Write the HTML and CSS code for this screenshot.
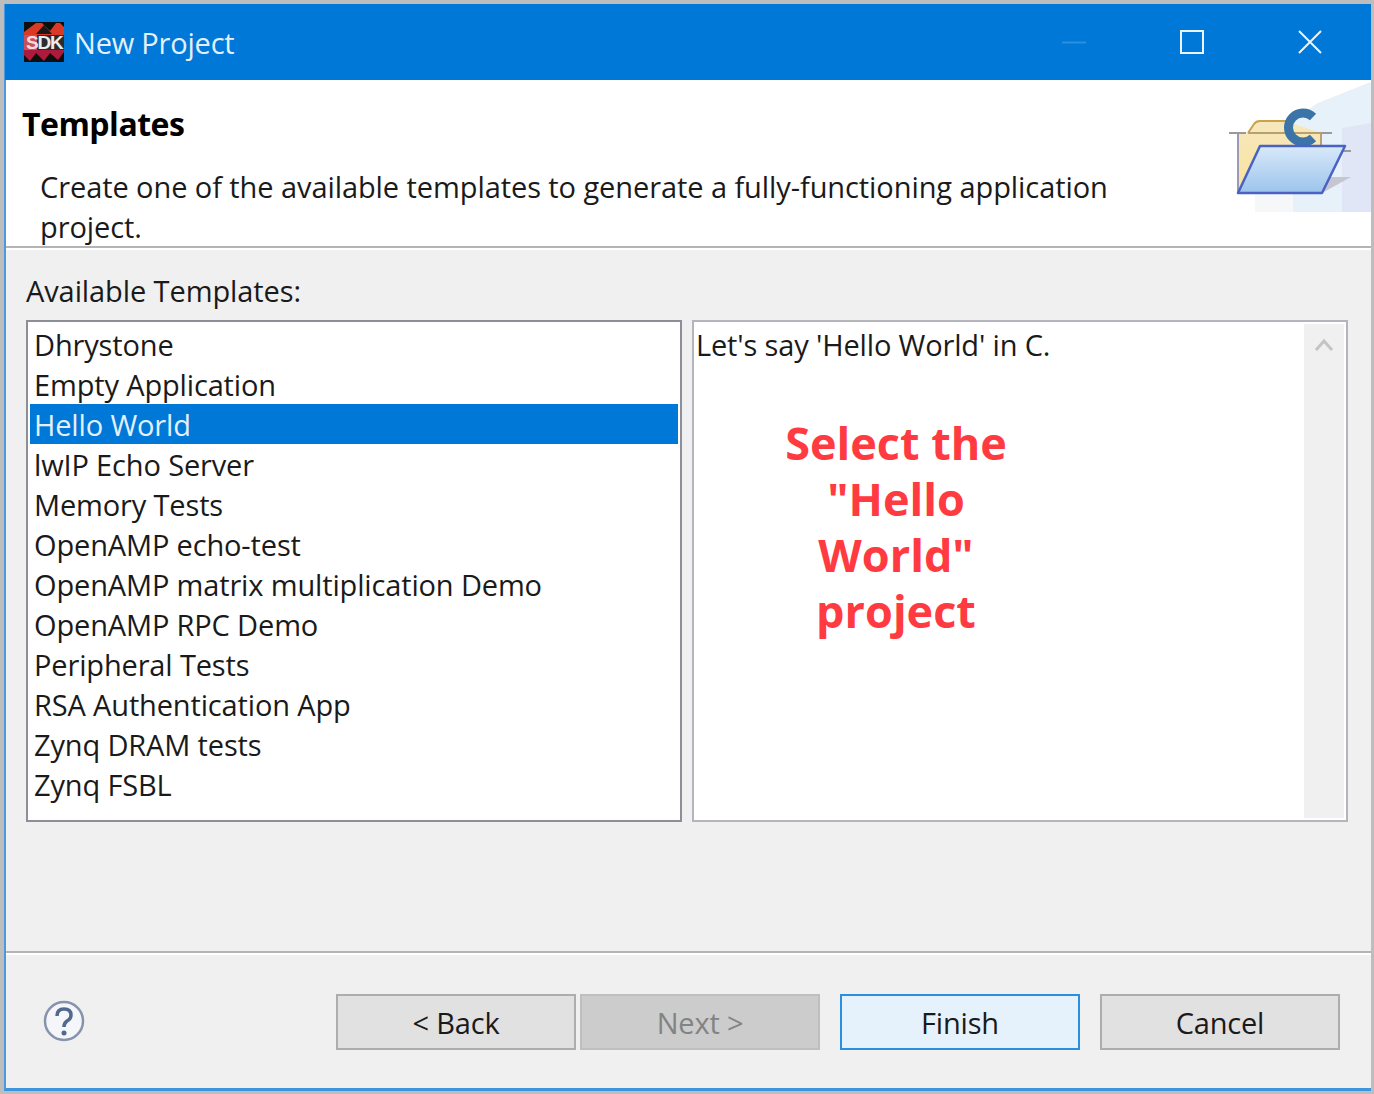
FILE: index.html
```html
<!DOCTYPE html>
<html lang="en">
  <head>
    <meta charset="UTF-8" />
    <meta name="viewport" content="width=device-width, initial-scale=1.0" />
    <title>New Project</title>
    <link rel="stylesheet" href="styles.css">
  </head>
  <body>
    <div class="window">
      <div class="titlebar">
        <svg class="app-icon" width="40" height="40" viewBox="0 0 40 40">
          <rect width="40" height="40" fill="#0e0e0e" />
          <path d="M0 10 L12 1 L18 1 L26 9 L32 1 L36 1 L40 5 L40 14 L0 14 Z" fill="#d93a25" />
          <path d="M20 3 L28 12 L12 12 Z" fill="#1a1a1a" />
          <path d="M0 28 L40 28 L40 30 L34 38 L26 31 L20 39 L12 31 L6 39 L0 33 Z" fill="#ad1a3c" />
          <rect x="0" y="13" width="13" height="15" fill="#c9505a" />
          <rect x="13" y="13" width="27" height="15" fill="#2c2c2c" />
          <text x="2" y="27" class="app-icon-text"><tspan class="app-icon-s">S</tspan>DK</text>
        </svg>
        <span class="titlebar-text">New Project</span>
        <div class="window-controls">
          <span class="control">
            <svg width="24" height="24" viewBox="0 0 24 24"><path d="M0 12.5 H24" stroke="#2b8fe0" stroke-width="2" /></svg>
          </span>
          <span class="control">
            <svg width="24" height="24" viewBox="0 0 24 24"><rect x="1" y="1" width="22" height="22" fill="none" stroke="#eaf4fc" stroke-width="2" /></svg>
          </span>
          <span class="control">
            <svg width="24" height="24" viewBox="0 0 24 24"><path d="M1 1 L23 23 M23 1 L1 23" stroke="#eaf4fc" stroke-width="2" /></svg>
          </span>
        </div>
      </div>

      <header class="banner">
        <h1>Templates</h1>
        <p>Create one of the available templates to generate a fully-functioning application project.</p>
        <svg class="banner-art" width="142" height="132" viewBox="0 0 142 132">
          <defs>
            <linearGradient id="front" x1="0" y1="0" x2="0" y2="1">
              <stop offset="0" stop-color="#d8e9f9" />
              <stop offset="1" stop-color="#9cc4ec" />
            </linearGradient>
            <linearGradient id="back" x1="0" y1="0" x2="0" y2="1">
              <stop offset="0" stop-color="#f6e8bd" />
              <stop offset="1" stop-color="#fbe39c" />
            </linearGradient>
          </defs>
          <path d="M26 132 V100 L64 40 L89 23 L142 2 V132 Z" fill="#f5f7f9" />
          <path d="M64 132 V40 L89 23 L142 2 V132 Z" fill="#e6f1fa" />
          <path d="M113 132 V48 L142 43 V132 Z" fill="#e0e6f5" />
          <path d="M9 113 V53 H19 L25 44 Q27 41 31 41 H56 L92 53 V100 L20 113 Z" fill="url(#back)" />
          <path d="M19 53 L25 44 Q27 41 31 41 H58" fill="none" stroke="#c9a24a" stroke-width="2" />
          <path d="M19 53 H92 V66" fill="none" stroke="#b8a070" stroke-width="2" />
          <path d="M9 53 V113" stroke="#9a9ab8" stroke-width="2" />
          <path d="M0 53 H17 M92 53 H103 M112 71 H122" stroke="#9a9a9a" stroke-width="2" fill="none" />
          <path d="M84 37 A14.5 14.5 0 1 0 84 58" fill="none" stroke="#3d74a8" stroke-width="9" />
          <path d="M93 113 L122 97 H100 Z" fill="#c6c6d0" />
          <path d="M9 113 L31 66 H116 L93 113 Z" fill="url(#front)" stroke="#4a62c4" stroke-width="2.5" stroke-linejoin="round" />
        </svg>
      </header>

      <main class="content">
        <label class="content-label">Available Templates:</label>
        <div class="panes">
          <ul class="template-list">
            <li>Dhrystone</li>
            <li>Empty Application</li>
            <li class="selected">Hello World</li>
            <li>lwIP Echo Server</li>
            <li>Memory Tests</li>
            <li>OpenAMP echo-test</li>
            <li>OpenAMP matrix multiplication Demo</li>
            <li>OpenAMP RPC Demo</li>
            <li>Peripheral Tests</li>
            <li>RSA Authentication App</li>
            <li>Zynq DRAM tests</li>
            <li>Zynq FSBL</li>
          </ul>
          <div class="details">
            <div class="details-body">
              <p class="details-text">Let's say 'Hello World' in C.</p>
              <p class="callout">Select the<br />"Hello<br />World"<br />project</p>
            </div>
            <div class="scrollbar">
              <svg width="20" height="14" viewBox="0 0 20 14"><path d="M2 12 L10 3 L18 12" fill="none" stroke="#c4c4c4" stroke-width="3" /></svg>
            </div>
          </div>
        </div>
      </main>

      <footer class="actions">
        <svg class="help" width="42" height="42" viewBox="0 0 42 42">
          <circle cx="21" cy="21" r="19" fill="#f4f6f9" stroke="#8793ad" stroke-width="2.5" />
          <path d="M14 16 Q14 9 21 9 Q28 9 28 15 Q28 19 24 21 Q21 23 21 27" fill="none" stroke="#52698f" stroke-width="3.5" />
          <circle cx="21" cy="33" r="2.5" fill="#52698f" />
        </svg>
        <div class="buttons">
          <button type="button" class="btn">&lt; Back</button>
          <button type="button" class="btn btn-disabled">Next &gt;</button>
          <button type="button" class="btn btn-default">Finish</button>
          <button type="button" class="btn">Cancel</button>
        </div>
      </footer>
    </div>
  </body>
</html>
```

FILE: styles.css
```css
html,
body {
  height: 100%;
}
body {
  margin: 0;
  padding: 4px 3px 3px 4px;
  box-sizing: border-box;
  background-color: #bdbdbd;
  font-family: "Open Sans", "Noto Sans", sans-serif;
  font-size: 29px;
  color: #1a1a1a;
  overflow: hidden;
}
.window {
  display: flex;
  flex-direction: column;
  height: 100%;
  border-left: 2px solid #4a9ae0;
  border-bottom: 3px solid #3e95de;
  box-sizing: border-box;
  background-color: #f0f0f0;
}
.titlebar {
  display: flex;
  align-items: center;
  height: 76px;
  margin-left: -1px;
  padding-left: 19px;
  background-color: #0078d7;
  color: #e3f0fb;
  flex-shrink: 0;
}
.app-icon {
  margin-right: 10px;
}
.app-icon-text {
  font-family: "Liberation Sans", sans-serif;
  font-size: 19px;
  font-weight: bold;
  letter-spacing: -1.2px;
  fill: #ececec;
}
.app-icon-s {
  fill: #f6dcdc;
}
.titlebar-text {
  font-size: 29px;
  letter-spacing: -0.2px;
}
.window-controls {
  display: flex;
  gap: 94px;
  margin-left: auto;
  margin-right: 49px;
}
.control {
  display: flex;
}
.banner {
  position: relative;
  height: 168px;
  padding: 20px 0 0 16px;
  box-sizing: border-box;
  background-color: white;
  border-bottom: 2px solid #b4b4b4;
  flex-shrink: 0;
}
.banner h1 {
  margin: 0;
  font-size: 32px;
  line-height: 48px;
  font-weight: bold;
  color: #000;
  letter-spacing: -0.5px;
}
.banner p {
  width: 1090px;
  margin: 19px 0 0 18px;
  line-height: 40px;
  letter-spacing: -0.08px;
}
.banner-art {
  position: absolute;
  right: 0;
  top: 0;
}
.content {
  flex: 1;
  padding: 21px 22px 0 20px;
  border-top: 2px solid white;
}
.content-label {
  display: block;
  height: 49px;
  line-height: 40px;
  letter-spacing: -0.1px;
}
.panes {
  display: flex;
  gap: 10px;
}
.template-list {
  width: 656px;
  height: 502px;
  margin: 0;
  padding: 2px;
  box-sizing: border-box;
  list-style: none;
  background-color: white;
  border: 2px solid #8e8e98;
}
.template-list li {
  height: 40px;
  padding-left: 4px;
  line-height: 42px;
  letter-spacing: -0.15px;
}
.template-list .selected {
  background-color: #0078d7;
  color: #e3f0fb;
}
.details {
  display: flex;
  width: 656px;
  height: 502px;
  padding: 2px;
  box-sizing: border-box;
  background-color: white;
  border: 2px solid #b4b4bc;
}
.details-body {
  flex: 1;
}
.details-text {
  margin: 0;
  line-height: 42px;
  letter-spacing: -0.15px;
}
.callout {
  width: 400px;
  margin: 49px 0 0 0;
  text-align: center;
  font-size: 45px;
  line-height: 56px;
  font-weight: bold;
  color: #ff3b41;
}
.scrollbar {
  display: flex;
  justify-content: center;
  width: 40px;
  padding-top: 14px;
  box-sizing: border-box;
  background-color: #f0f0f0;
}
.scrollbar svg {
  display: block;
}
.actions {
  display: flex;
  align-items: center;
  height: 137px;
  padding: 2px 31px 0 37px;
  box-sizing: border-box;
  border-top: 2px solid #b4b4b4;
  box-shadow: inset 0 2px 0 white;
  flex-shrink: 0;
}
.help {
  margin-bottom: 2px;
}
.buttons {
  display: flex;
  margin-left: auto;
}
.btn {
  width: 240px;
  height: 56px;
  padding: 2px 0 0;
  box-sizing: border-box;
  font-family: inherit;
  font-size: 29px;
  letter-spacing: -0.2px;
  color: #1a1a1a;
  background-color: #e1e1e1;
  border: 2px solid #adadad;
}
.btn-disabled {
  margin-left: 4px;
  background-color: #cccccc;
  border-color: #bfbfbf;
  color: #838383;
}
.btn-default {
  margin: 0 20px;
  background-color: #e5f1fb;
  border-color: #2a8fe0;
}
```
